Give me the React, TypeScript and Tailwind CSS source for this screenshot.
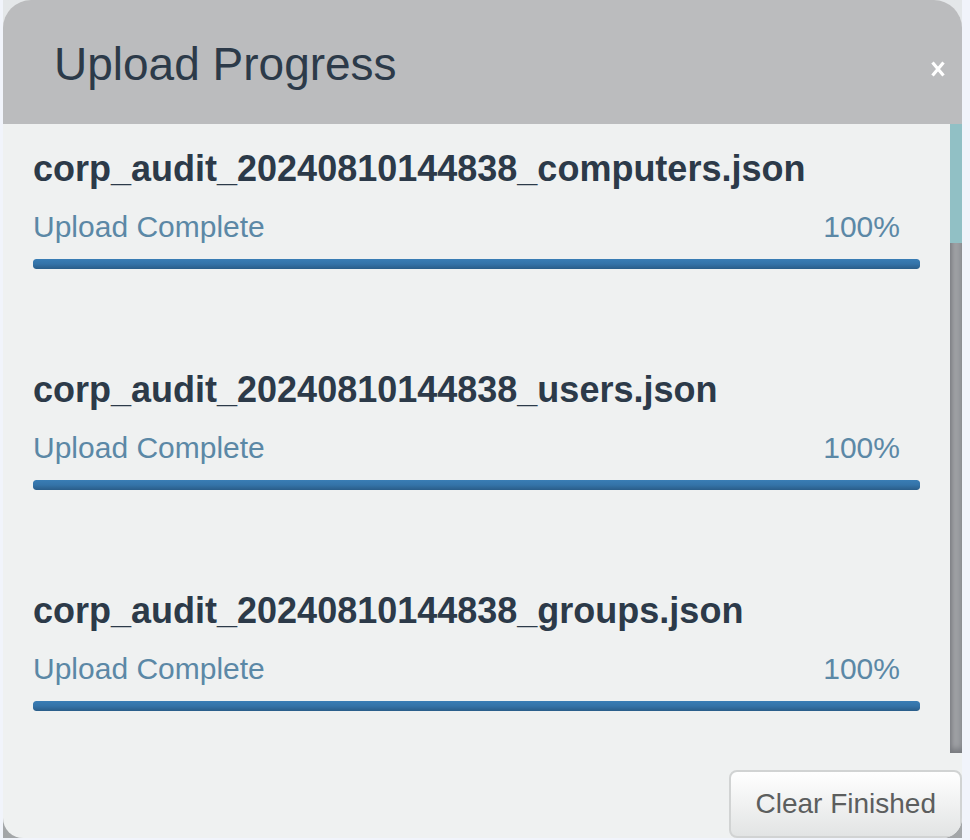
const files = [
  { name: "corp_audit_20240810144838_computers.json", progress: 100 },
  { name: "corp_audit_20240810144838_users.json", progress: 100 },
  { name: "corp_audit_20240810144838_groups.json", progress: 100 },
];

function UploadItem({ name, progress }: { name: string; progress: number }) {
  return (
    <li>
      <h2 className="text-[36px] leading-[44px] font-bold text-[#2c3a49]">{name}</h2>
      <div className="mt-[18px] flex justify-between pr-5 text-[30px] leading-9 text-[#5b88a6]">
        <span>Upload Complete</span>
        <span>{progress}%</span>
      </div>
      <div
        role="progressbar"
        aria-label={name}
        aria-valuenow={progress}
        aria-valuemin={0}
        aria-valuemax={100}
        className="mt-3.5 h-2.5 overflow-hidden rounded-[3px]"
      >
        <div
          className="h-full rounded-[3px] bg-linear-to-b from-[#397db5] via-[#3473a8] to-[#2a5d89]"
          style={{ width: `${progress}%` }}
        />
      </div>
    </li>
  );
}

export default function App() {
  return (
    <main className="bg-[#f1f4fb] pr-2 pb-0.5 pl-[3px] font-['Liberation_Sans',Arial,sans-serif]">
      <div className="bg-linear-to-b from-[#e4e7e9] from-50% to-[#a3a6a8] to-50%">
        <section
          role="dialog"
          aria-labelledby="upload-title"
          className="overflow-hidden rounded-t-[28px] rounded-b-[20px] bg-[#eff1f1]"
        >
          <header className="flex h-[124px] items-center justify-between bg-[#bbbcbe] pt-1 pr-4 pl-[51px]">
            <h1 id="upload-title" className="text-[46px] leading-[56px] text-[#2c3a49]">
              Upload Progress
            </h1>
            <button type="button" aria-label="Close" className="mt-2.5 text-white">
              <svg width="16" height="16" viewBox="0 0 16 16" fill="none" stroke="currentColor" strokeWidth="3.2">
                <path d="M2.5 1.5 13.5 14.5M13.5 1.5 2.5 14.5" />
              </svg>
            </button>
          </header>
          <div className="flex">
            <ul className="flex flex-1 flex-col gap-[99px] pt-[23px] pr-[30px] pb-[42px] pl-[30px]">
              {files.map((file) => (
                <UploadItem key={file.name} name={file.name} progress={file.progress} />
              ))}
            </ul>
            <div className="flex w-3 flex-col bg-[#9fa1a5] shadow-[inset_0_-4px_6px_#77797e,inset_2px_0_3px_#8b8d91]">
              <div className="h-[119px] bg-[#91c0c5]" />
            </div>
          </div>
          <footer className="flex justify-end pt-[17px]">
            <button
              type="button"
              className="h-[68px] rounded-lg border-2 border-[#d1d3d3] bg-linear-to-b from-white to-[#e2e4e4] px-6 text-[28px] leading-8 text-[#5c5e5e]"
            >
              Clear Finished
            </button>
          </footer>
        </section>
      </div>
    </main>
  );
}
